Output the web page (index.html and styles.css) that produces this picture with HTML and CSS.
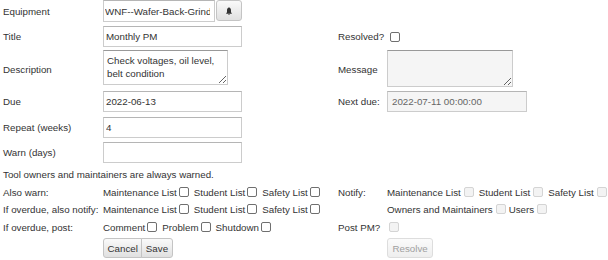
FILE: index.html
```html
<!DOCTYPE html>
<html lang="en">
<head>
    <meta charset="UTF-8">
    <meta name="viewport" content="width=device-width, initial-scale=1.0">
    <title>Preventive Maintenance</title>
    <link rel="stylesheet" href="styles.css">
</head>
<body>
    <!-- Preventive maintenance task form -->
    <form class="pm-form">
        <!-- Equipment picker -->
        <label class="field-label">Equipment</label>
        <div class="equip-picker">
            <input type="text" class="text-input equip-input" value="WNF--Wafer-Back-Grinder">
            <button type="button" class="btn icon-btn" title="Notifications">
                <svg width="6" height="8" viewBox="0 0 6 8">
                    <path d="M3 0.2c-0.4 0-0.6 0.3-0.6 0.6C1.3 1.2 1 2.3 1 3.5v1.7L0.2 6.3v0.4h5.6V6.3L5 5.2V3.5c0-1.2-0.3-2.3-1.4-2.7 0-0.3-0.2-0.6-0.6-0.6z" fill="#333"/>
                    <path d="M2.2 7.1h1.6c0 0.4-0.4 0.8-0.8 0.8s-0.8-0.4-0.8-0.8z" fill="#333"/>
                </svg>
            </button>
        </div>
        <span></span>
        <span></span>

        <!-- Title / resolved -->
        <label class="field-label">Title</label>
        <input type="text" class="text-input" value="Monthly PM">
        <label class="field-label">Resolved?</label>
        <div><input type="checkbox" class="check"></div>

        <!-- Description / message -->
        <label class="field-label">Description</label>
        <textarea class="text-area desc-area">Check voltages, oil level, belt condition</textarea>
        <label class="field-label">Message</label>
        <textarea class="text-area msg-area" disabled></textarea>

        <!-- Due dates -->
        <label class="field-label">Due</label>
        <input type="text" class="text-input" value="2022-06-13">
        <label class="field-label">Next due:</label>
        <input type="text" class="text-input next-due" value="2022-07-11 00:00:00" disabled>

        <!-- Repeat and warning intervals -->
        <label class="field-label">Repeat (weeks)</label>
        <input type="text" class="text-input" value="4">
        <span></span>
        <span></span>

        <label class="field-label">Warn (days)</label>
        <input type="text" class="text-input" value="">
        <span></span>
        <span></span>

        <p class="note">Tool owners and maintainers are always warned.</p>

        <!-- Who gets warned / notified -->
        <span class="field-label">Also warn:</span>
        <div class="check-list">
            <label>Maintenance List<input type="checkbox" class="check"></label>
            <label>Student List<input type="checkbox" class="check"></label>
            <label>Safety List<input type="checkbox" class="check"></label>
        </div>
        <span class="field-label">Notify:</span>
        <div class="check-list wide">
            <label>Maintenance List<input type="checkbox" class="check" disabled></label>
            <label>Student List<input type="checkbox" class="check" disabled></label>
            <label>Safety List<input type="checkbox" class="check" disabled></label>
        </div>

        <span class="field-label">If overdue, also notify:</span>
        <div class="check-list">
            <label>Maintenance List<input type="checkbox" class="check"></label>
            <label>Student List<input type="checkbox" class="check"></label>
            <label>Safety List<input type="checkbox" class="check"></label>
        </div>
        <span></span>
        <div class="check-list tight">
            <label>Owners and Maintainers<input type="checkbox" class="check" disabled></label>
            <label>Users<input type="checkbox" class="check" disabled></label>
        </div>

        <span class="field-label">If overdue, post:</span>
        <div class="check-list">
            <label>Comment<input type="checkbox" class="check"></label>
            <label>Problem<input type="checkbox" class="check"></label>
            <label>Shutdown<input type="checkbox" class="check"></label>
        </div>
        <span class="field-label">Post PM?</span>
        <div><input type="checkbox" class="check post-check" disabled></div>

        <!-- Form actions -->
        <span></span>
        <div class="btn-group">
            <button type="button" class="btn">Cancel</button><button type="submit" class="btn">Save</button>
        </div>
        <span></span>
        <div>
            <button type="button" class="btn" disabled>Resolve</button>
        </div>
    </form>
</body>
</html>
```

FILE: styles.css
```css
/* General page styles */
html {
    overflow: hidden; /* Right hand list runs to the window edge */
}

body {
    font-family: "Liberation Sans", Arial, sans-serif;
    font-size: 9.75px;
    color: #333333;
    background: #ffffff;
    margin: 0 0 0 3px;
}

/* Form grid: label / field / label / field */
.pm-form {
    display: grid;
    grid-template-columns: 100px 235px 49px 1fr;
    grid-template-rows: 23px 27px 39px 25px 26px 25px 19px 16px 18px 18px 24px;
    align-items: center;
    white-space: nowrap;
}

.field-label {
    line-height: 13px;
}

/* Text inputs */
.text-input {
    box-sizing: border-box;
    width: 139px;
    height: 21px;
    padding: 1px 2px;
    font-family: inherit;
    font-size: 9.75px;
    color: #333333;
    border: 1px solid #cccccc;
    border-top-color: #b5b5b5;
    border-radius: 0;
    background: #ffffff;
    outline: none;
}

.text-input:disabled {
    background: #f5f5f5; /* Greyed out when read-only */
    color: #666666;
}

.next-due {
    width: 140px;
    padding: 1px 4px;
}

/* Equipment input with its button */
.equip-picker {
    display: flex;
    align-items: flex-start;
    gap: 1px;
    align-self: start;
}

.equip-input {
    width: 112px;
    height: 22px;
    padding: 1px 4px 1px 1px; /* Long names get clipped on the right */
}

/* Text areas */
.text-area {
    box-sizing: border-box;
    padding: 3px 3px;
    font-family: inherit;
    font-size: 9.75px;
    line-height: 13px;
    color: #333333;
    border: 1px solid #cccccc;
    border-top-color: #999999;
    border-radius: 0;
    background: #ffffff;
    align-self: start;
    outline: none;
}

.text-area:disabled {
    background: #f5f5f5;
}

.desc-area {
    width: 125px;
    height: 35px;
}

.msg-area {
    width: 126px;
    height: 37px;
}

/* Note spanning the whole form */
.note {
    grid-column: 1 / -1;
    margin: 0;
}

/* Checkbox lists */
.check-list {
    display: flex;
    align-items: center;
    gap: 5px;
}

.check-list label {
    display: inline-flex;
    align-items: center;
}

.check-list.tight {
    gap: 3px;
}

.check {
    appearance: none;
    -webkit-appearance: none;
    box-sizing: border-box;
    width: 10px;
    height: 10px;
    margin: 0 0 0 2px;
    border: 1px solid #6f6f6f;
    border-radius: 2px;
    background: #ffffff;
    vertical-align: middle;
}

.check-list.wide .check,
.check-list.tight .check {
    margin-left: 3px;
}

.check:disabled {
    border-color: #d4d4d4; /* Light grey when not editable */
    background: #f3f3f3;
}

.pm-form > div > .check {
    margin-left: 3px;
    display: block;
}

.pm-form > div > .post-check {
    margin-left: 2px;
}

/* Buttons */
.btn {
    box-sizing: border-box;
    height: 20px;
    padding: 0 3.5px;
    font-family: inherit;
    font-size: 9.75px;
    color: #333333;
    background: linear-gradient(#fafafa, #e0e0e0); /* Light grey gradient */
    border: 1px solid #c4c4c4;
    border-radius: 3px;
    cursor: pointer;
}

.btn:disabled {
    color: #a0a0a0;
    background: linear-gradient(#fbfbfb, #eeeeee);
    border-color: #dddddd;
    padding: 0 4.5px;
    cursor: default;
}

.icon-btn {
    width: 26px;
    height: 21px;
    display: flex;
    align-items: center;
    justify-content: center;
    padding: 0;
}

/* Grouped buttons share a border */
.btn-group {
    display: flex;
}

.btn-group .btn:first-child {
    border-top-right-radius: 0;
    border-bottom-right-radius: 0;
}

.btn-group .btn + .btn {
    margin-left: -1px;
    border-top-left-radius: 0;
    border-bottom-left-radius: 0;
}
```
